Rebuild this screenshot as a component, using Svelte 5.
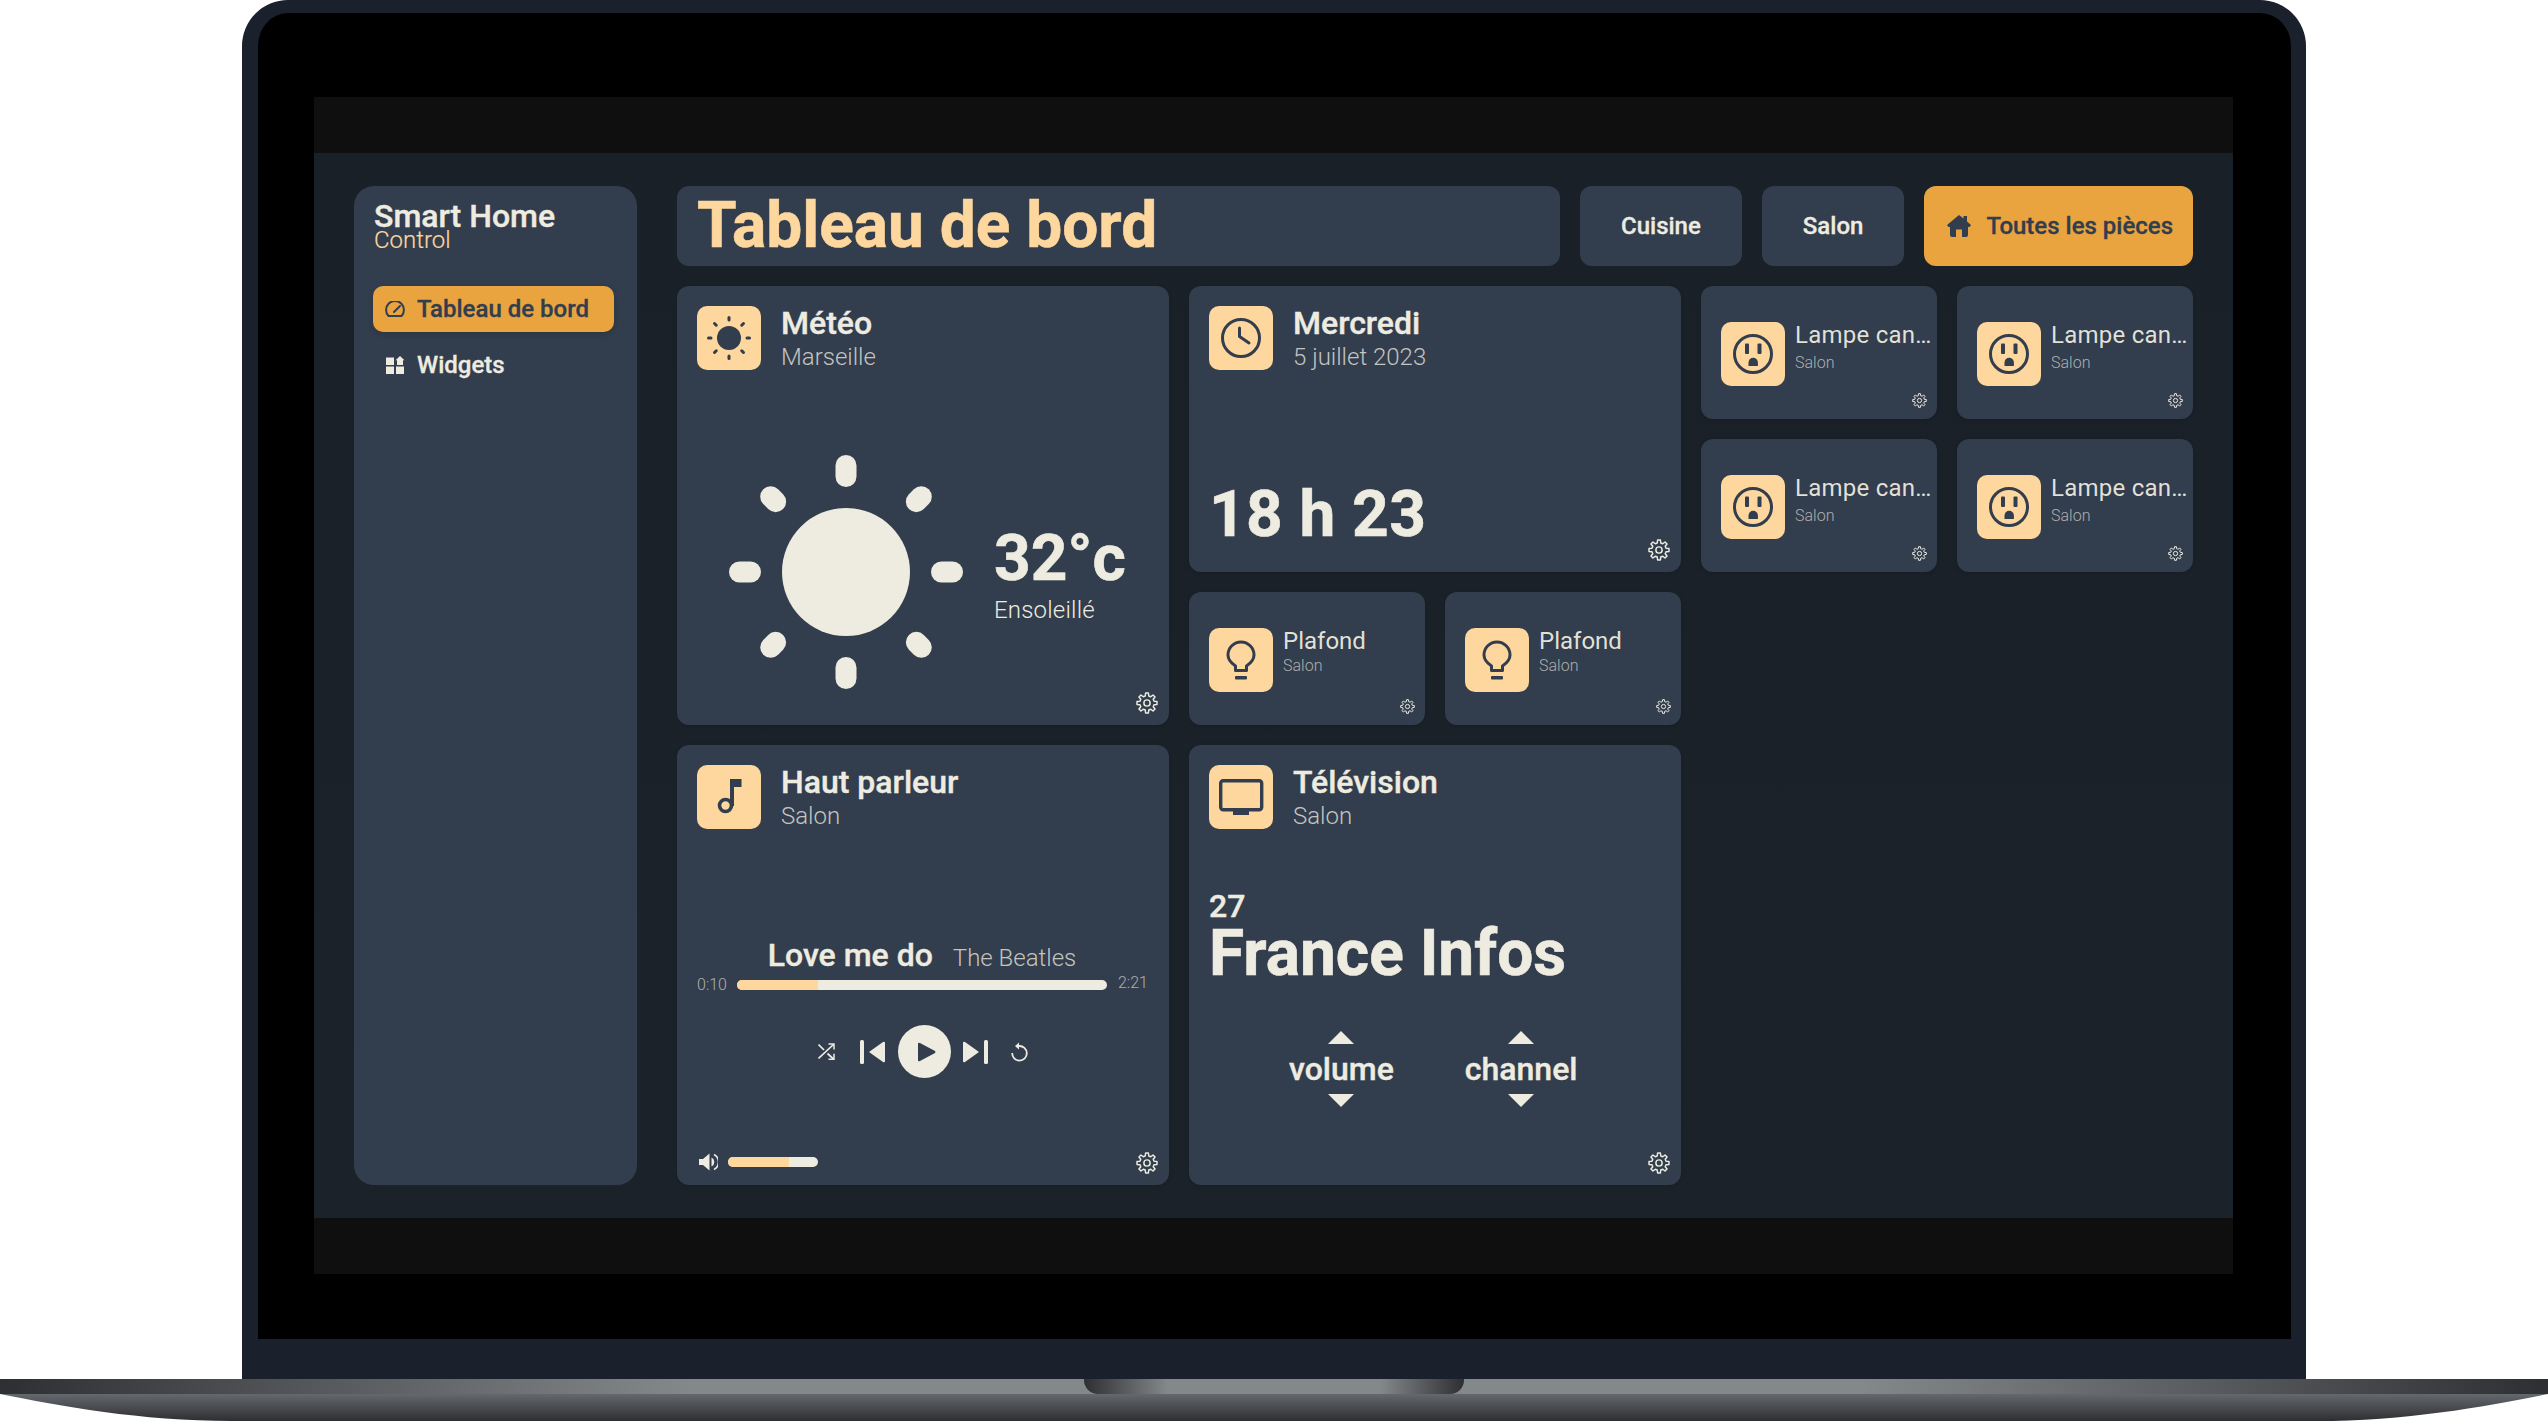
<script>
	// 8-tooth outline for the settings gear
	const gearPoints = [];
	for (let i = 0; i < 8; i++) {
		const a = i * 45 - 90;
		for (const [r, d] of [[7.9, -14], [11, -8], [11, 8], [7.9, 14]]) {
			const rad = ((a + d) * Math.PI) / 180;
			gearPoints.push((12 + r * Math.cos(rad)).toFixed(2) + "," + (12 + r * Math.sin(rad)).toFixed(2));
		}
	}
	const gear = gearPoints.join(" ");

	const rays = [0, 45, 90, 135, 180, 225, 270, 315];
	const plafonds = [1, 2];
	const lamps = [1, 2, 3, 4];
</script>

{#snippet settings(small)}
	<svg class="gear" class:small viewBox="0 0 24 24" fill="none" stroke="#eeece0" stroke-width="1.6" stroke-linejoin="round">
		<polygon points={gear} />
		<circle cx="12" cy="12" r="3.4" />
	</svg>
{/snippet}

{#snippet head(title, sub)}
	<div class="head-text">
		<div class="title">{title}</div>
		<div class="sub">{sub}</div>
	</div>
{/snippet}

{#snippet mini(name)}
	<div class="mini-text">
		<div class="mini-title">{name}</div>
		<div class="mini-sub">Salon</div>
	</div>
{/snippet}

<div class="device">
	<div class="lid">
		<div class="screen">
			<div class="bar"></div>
			<div class="app">
				<aside class="side">
					<div class="brand">Smart Home</div>
					<div class="brand-sub">Control</div>
					<nav>
						<div class="nav-item active">
							<svg width="20" height="16" viewBox="0 0 20 16" fill="none" stroke="#323d4d" stroke-width="2" stroke-linecap="round" stroke-linejoin="round">
								<path d="M3.5 15H16.500A8.900 8.900 0 1 0 3.500 15Z" />
								<path d="M9 11L15 5" />
							</svg>
							Tableau de bord
						</div>
						<div class="nav-item">
							<svg width="20" height="18" viewBox="0 0 19 18" fill="#eeece0">
								<rect x="0.500" y="1.500" width="8" height="7.500" />
								<rect x="0.500" y="10.500" width="8" height="7.500" />
								<rect x="10.500" y="10.500" width="8" height="7.500" />
								<path d="M14.500 0L19 4.200H17.500V9H11.500V4.200H10Z" />
							</svg>
							Widgets
						</div>
					</nav>
				</aside>

				<main class="main">
					<header class="top">
						<h1>Tableau de bord</h1>
						<button class="room">Cuisine</button>
						<button class="room">Salon</button>
						<button class="on">
							<svg width="24" height="22" viewBox="0 0 24 22" fill="#323d4d">
								<path d="M12 0L16.500 3.500V1H20V6.500L24 10L22.500 12H21V20A2 2 0 0 1 19 22H15V14.500H9V22H5A2 2 0 0 1 3 20V12H1.500L0 10Z" />
							</svg>
							Toutes les pièces
						</button>
					</header>

					<section class="grid">
						<article class="card meteo">
							<div class="head">
								<svg class="tile" viewBox="0 0 64 64">
									<rect width="64" height="64" rx="10" fill="#fdd79d" />
									<circle cx="32" cy="32" r="12" fill="#323d4d" />
									{#each rays as r}
										<rect x="30.500" y="10" width="3" height="5.500" rx="1.500" fill="#323d4d" transform="rotate({r} 32 32)" />
									{/each}
								</svg>
								{@render head("Météo", "Marseille")}
							</div>
							<div class="weather">
								<svg width="234" height="234" viewBox="-117 -117 234 234" fill="#eeece0">
									<circle r="64" />
									{#each rays as r}
										{#if r % 90 === 0}
											<rect x="-10.500" y="-117" width="21" height="32" rx="10.500" transform="rotate({r})" />
										{:else}
											<rect x="-10.500" y="-117" width="21" height="28" rx="10.500" transform="rotate({r})" />
										{/if}
									{/each}
								</svg>
								<div class="temp">
									<div class="deg">32°c</div>
									<div class="cond">Ensoleillé</div>
								</div>
							</div>
							{@render settings(false)}
						</article>

						<article class="card clock">
							<div class="head">
								<svg class="tile" viewBox="0 0 64 64" fill="none" stroke="#323d4d" stroke-width="3">
									<rect width="64" height="64" rx="10" fill="#fdd79d" stroke="none" />
									<circle cx="32" cy="32" r="18.500" />
									<path d="M30.500 22V30.500L40 37" stroke-linecap="round" stroke-linejoin="round" />
								</svg>
								{@render head("Mercredi", "5 juillet 2023")}
							</div>
							<div class="time">18 h 23</div>
							{@render settings(false)}
						</article>

						{#each lamps as l}
							<article class="card small lamp">
								<svg class="tile" viewBox="0 0 64 64" fill="none" stroke="#323d4d" stroke-width="3">
									<rect width="64" height="64" rx="10" fill="#fdd79d" stroke="none" />
									<circle cx="32" cy="32" r="18.500" />
									<g fill="#323d4d" stroke="none">
										<rect x="24" y="21.500" width="4" height="10.500" rx="1" />
										<rect x="36.500" y="21.500" width="4" height="10.500" rx="1" />
										<path d="M27.500 44V40.500A4.700 4.700 0 0 1 36.900 40.500V44Z" />
									</g>
								</svg>
								{@render mini("Lampe canapé")}
								{@render settings(true)}
							</article>
						{/each}

						{#each plafonds as p}
							<article class="card small plafond">
								<svg class="tile" viewBox="0 0 64 64" fill="none" stroke="#323d4d" stroke-width="3">
									<rect width="64" height="64" rx="10" fill="#fdd79d" stroke="none" />
									<path d="M26.500 42.500H37.500V38C42 35 45 31.500 45 27A13 13 0 0 0 19 27C19 31.500 22 35 26.500 38Z" stroke-linejoin="round" />
									<rect x="26" y="48" width="12" height="3.500" rx="1" fill="#323d4d" stroke="none" />
								</svg>
								{@render mini("Plafond")}
								{@render settings(true)}
							</article>
						{/each}

						<article class="card speaker">
							<div class="head">
								<svg class="tile" viewBox="0 0 64 64">
									<rect width="64" height="64" rx="10" fill="#fdd79d" />
									<path d="M33 14H44.500V22H37V41H33Z" fill="#323d4d" />
									<circle cx="28.500" cy="40.500" r="6" fill="none" stroke="#323d4d" stroke-width="3.600" />
								</svg>
								{@render head("Haut parleur", "Salon")}
							</div>
							<div class="song">
								<span class="song-name">Love me do</span>
								<span class="song-artist">The Beatles</span>
							</div>
							<div class="progress">
								<span class="stamp">0:10</span>
								<div class="track wide"><div class="fill" style="width: 22%"></div></div>
								<span class="stamp end">2:21</span>
							</div>
							<div class="controls">
								<svg class="shuffle" width="17" height="17" viewBox="0 0 17 17" fill="none" stroke="#eeece0" stroke-width="1.700">
									<path d="M0.500 1.500L6 7M9.500 10.500L15.500 16M0.500 15.500L15.500 1.500" />
									<path d="M10.500 1H16V6.500M10.500 16.200H16V10.700" stroke-width="1.500" />
								</svg>
								<svg class="prev" width="25" height="24" viewBox="0 0 25 24" fill="#eeece0">
									<rect width="4" height="24" rx="1.500" />
									<path d="M9 12L23 2Q25 1 25 3V21Q25 23 23 22Z" />
								</svg>
								<div class="play">
									<svg width="18" height="20" viewBox="0 0 18 20" fill="#323d4d">
										<path d="M0 2Q0 0 2 1L17 9Q18 10 17 11L2 19Q0 20 0 18Z" />
									</svg>
								</div>
								<svg class="next" width="25" height="24" viewBox="0 0 25 24" fill="#eeece0">
									<rect x="21" width="4" height="24" rx="1.500" />
									<path d="M16 12L2 2Q0 1 0 3V21Q0 23 2 22Z" />
								</svg>
								<svg class="repeat" width="17" height="20" viewBox="0 0 17 20" fill="none" stroke="#eeece0" stroke-width="1.800">
									<path d="M8 4A7.300 7.300 0 1 1 1.200 11" />
									<path d="M8 0.500L4 4L8 7.500Z" fill="#eeece0" stroke="none" />
								</svg>
							</div>
							<div class="volume">
								<svg width="19" height="18" viewBox="0 0 19 18" fill="#eeece0">
									<path d="M0 6H4L10.500 0.500V17.500L4 12H0Z" />
									<path d="M12.500 4.500A5 5 0 0 1 12.500 13.500Z" />
									<path d="M15 1.500A8.500 8.500 0 0 1 15 16.500" fill="none" stroke="#eeece0" stroke-width="1.600" />
								</svg>
								<div class="track short"><div class="fill" style="width: 68%"></div></div>
							</div>
							{@render settings(false)}
						</article>

						<article class="card tv">
							<div class="head">
								<svg class="tile" viewBox="0 0 64 64">
									<rect width="64" height="64" rx="10" fill="#fdd79d" />
									<rect x="11.700" y="15.700" width="41" height="29" rx="2.500" fill="none" stroke="#323d4d" stroke-width="3.400" />
									<rect x="24" y="45" width="16" height="5" fill="#323d4d" />
								</svg>
								{@render head("Télévision", "Salon")}
							</div>
							<div class="chan-num">27</div>
							<div class="chan-name">France Infos</div>
							<div class="remote">
								<div class="rocker">
									<i class="up"></i>
									<span>volume</span>
									<i class="down"></i>
								</div>
								<div class="rocker">
									<i class="up"></i>
									<span>channel</span>
									<i class="down"></i>
								</div>
							</div>
							{@render settings(false)}
						</article>
					</section>
				</main>
			</div>
			<div class="bar"></div>
		</div>
	</div>
	<div class="base-top"><div class="notch"></div></div>
	<div class="base-bottom"></div>
</div>

<style>
	:global(body) {
		background: #fff;
		font-family: Roboto, "Liberation Sans", sans-serif;
		color: #eeece0;
	}

	.device {
		width: 2548px;
		height: 1421px;
		overflow: hidden;
		display: flex;
		flex-direction: column;
	}

	.lid {
		box-sizing: border-box;
		width: 2064px;
		height: 1379px;
		margin-left: 242px;
		background: #000;
		border: solid #1a202c;
		border-width: 13px 15px 40px 16px;
		border-radius: 46px 46px 0 0;
		padding: 84px 58px 65px 56px;
	}

	.screen {
		height: 100%;
		display: flex;
		flex-direction: column;
	}

	.bar {
		height: 56px;
		background: #0f0f0f;
	}

	.app {
		flex: 1;
		background: linear-gradient(#1a2028, #1b2229);
		display: flex;
		gap: 40px;
		padding: 33px 40px;
		min-height: 0;
	}

	.side {
		width: 283px;
		flex: none;
		box-sizing: border-box;
		background: #323d4d;
		border-radius: 20px;
		padding: 16px 23px 0 19px;
	}

	.brand {
		font-size: 32px;
		font-weight: 500;
		line-height: 28px;
		margin-left: 1px;
		-webkit-text-stroke: 0.4px;
	}

	.brand-sub {
		font-size: 24px;
		font-weight: 300;
		line-height: 22px;
		margin: -1px 0 0 1px;
		color: #fdd79d;
		-webkit-text-stroke: 0.2px;
	}

	nav {
		margin-top: 35px;
		display: flex;
		flex-direction: column;
		gap: 10px;
	}

	.nav-item {
		height: 46px;
		display: flex;
		align-items: center;
		gap: 12px;
		padding-left: 12px;
		font-size: 24px;
		font-weight: 500;
		border-radius: 10px;
		-webkit-text-stroke: 0.3px;
	}

	.nav-item.active {
		background: #e9a440;
		color: #323d4d;
		box-shadow: 0 2px 6px rgba(0, 0, 0, 0.15);
	}

	.main {
		flex: 1;
		min-width: 0;
	}

	.top {
		display: flex;
		gap: 20px;
		height: 80px;
		margin-bottom: 20px;
	}

	h1 {
		flex: 1;
		margin: 0;
		background: #323d4d;
		border-radius: 12px;
		padding-left: 20px;
		font-size: 64px;
		font-weight: 700;
		line-height: 80px;
		color: #fdd79d;
		-webkit-text-stroke: 0.6px;
	}

	button {
		border: 0;
		border-radius: 12px;
		font: 500 24px Roboto, sans-serif;
		-webkit-text-stroke: 0.3px;
	}

	button.room {
		background: #323d4d;
		color: #eeece0;
		padding: 0 41px;
	}

	button.on {
		display: flex;
		align-items: center;
		gap: 15px;
		padding: 0 20px 0 23px;
		background: #e9a440;
		color: #323d4d;
	}

	.grid {
		display: grid;
		grid-template-columns: repeat(6, 236px);
		grid-template-rows: repeat(5, 133px) 134px;
		gap: 20px;
	}

	.card {
		position: relative;
		box-sizing: border-box;
		background: #323d4d;
		border-radius: 12px;
		padding: 20px;
		display: flex;
		flex-direction: column;
		min-width: 0;
		box-shadow: 0 1px 4px rgba(0, 0, 0, 0.12);
	}

	.meteo {
		grid-column: span 2;
		grid-row: span 3;
	}

	.clock {
		grid-column: span 2;
		grid-row: span 2;
	}

	.speaker {
		grid-column: 1 / span 2;
		grid-row: 4 / span 3;
		padding-bottom: 11px;
	}

	.tv {
		grid-column: 3 / span 2;
		grid-row: 4 / span 3;
	}

	.small {
		flex-direction: row;
		gap: 10px;
		padding: 36px 0 0 20px;
	}

	.gear {
		position: absolute;
		right: 11px;
		bottom: 11px;
		width: 22px;
		height: 22px;
	}

	.gear.small {
		right: 10px;
		bottom: 11px;
		width: 15px;
		height: 15px;
	}

	.head {
		display: flex;
		gap: 20px;
		flex: none;
	}

	.tile {
		width: 64px;
		height: 64px;
		flex: none;
	}

	.title {
		font-size: 32px;
		font-weight: 500;
		line-height: 36px;
		margin-top: -1px;
		-webkit-text-stroke: 0.4px;
	}

	.sub {
		font-size: 24px;
		font-weight: 300;
		line-height: 28px;
		margin-top: 2px;
		color: rgba(238, 236, 224, 0.78);
	}

	.mini-text {
		min-width: 0;
		flex: 1;
		padding-right: 2px;
		margin-top: -1px;
	}

	.mini-title {
		font-size: 24px;
		font-weight: 400;
		line-height: 28px;
		white-space: nowrap;
		overflow: hidden;
		text-overflow: ellipsis;
		color: rgba(238, 236, 224, 0.95);
	}

	.lamp .mini-title {
		letter-spacing: 0.25px;
	}

	.mini-sub {
		font-size: 16px;
		font-weight: 300;
		line-height: 20px;
		margin-top: 1px;
		color: rgba(238, 236, 224, 0.66);
	}

	.lamp .mini-sub {
		margin-top: 4px;
	}

	.weather {
		display: flex;
		align-items: center;
		gap: 31px;
		margin: 84px 0 0 32px;
	}

	.temp {
		margin-top: 6px;
	}

	.deg {
		font-size: 64px;
		font-weight: 700;
		line-height: 64px;
		-webkit-text-stroke: 0.6px;
	}

	.cond {
		font-size: 24px;
		font-weight: 300;
		line-height: 28px;
		margin-top: 5px;
		letter-spacing: 0.2px;
	}

	.time {
		margin-top: auto;
		margin-bottom: 5px;
		font-size: 64px;
		font-weight: 700;
		line-height: 64px;
		letter-spacing: 0.4px;
		-webkit-text-stroke: 0.6px;
	}

	.song {
		margin-top: 107px;
		padding-right: 2px;
		display: flex;
		justify-content: center;
		align-items: baseline;
		gap: 20px;
	}

	.song-name {
		font-size: 32px;
		font-weight: 500;
		line-height: 36px;
		-webkit-text-stroke: 0.4px;
	}

	.song-artist {
		font-size: 24px;
		font-weight: 300;
		color: rgba(238, 236, 224, 0.78);
	}

	.progress {
		margin-top: 2px;
		display: flex;
		align-items: center;
		gap: 10px;
		height: 20px;
	}

	.stamp {
		font-size: 16px;
		font-weight: 300;
		line-height: 20px;
		color: rgba(238, 236, 224, 0.66);
	}

	.stamp.end {
		margin: 0 0 4px 1px;
	}

	.track {
		height: 10px;
		border-radius: 5px;
		background: #eeece0;
		overflow: hidden;
	}

	.track.wide {
		width: 370px;
	}

	.track.short {
		width: 90px;
	}

	.fill {
		height: 100%;
		background: #fdd79d;
	}

	.controls {
		margin-top: 30px;
		display: flex;
		align-items: center;
		justify-content: center;
	}

	.prev {
		margin: 0 13px 0 25px;
	}

	.next {
		margin: 0 23px 0 12px;
	}

	.play {
		width: 53px;
		height: 53px;
		border-radius: 50%;
		background: #eeece0;
		display: flex;
		align-items: center;
		justify-content: center;
	}

	.play svg {
		margin-left: 4px;
	}

	.volume {
		margin-top: auto;
		height: 24px;
		display: flex;
		align-items: center;
		gap: 10px;
		padding-left: 2px;
	}

	.chan-num {
		margin-top: 58px;
		font-size: 32px;
		font-weight: 500;
		line-height: 36px;
		-webkit-text-stroke: 0.4px;
	}

	.chan-name {
		margin-top: -2px;
		font-size: 64px;
		font-weight: 700;
		line-height: 64px;
		-webkit-text-stroke: 0.6px;
	}

	.remote {
		margin: 45px 0 0 80px;
		display: flex;
		gap: 71px;
	}

	.rocker {
		display: flex;
		flex-direction: column;
		align-items: center;
		gap: 7px;
		font-size: 32px;
		font-weight: 500;
		line-height: 36px;
		-webkit-text-stroke: 0.4px;
	}

	.up,
	.down {
		width: 0;
		height: 0;
		border-left: 13px solid transparent;
		border-right: 13px solid transparent;
	}

	.up {
		border-bottom: 13px solid #eeece0;
	}

	.down {
		border-top: 13px solid #eeece0;
	}

	.base-top {
		height: 15px;
		flex: none;
		background: linear-gradient(90deg, #2e2f33, #83888b 27%, #83888b 73%, #2e2f33);
		display: flex;
		justify-content: center;
	}

	.notch {
		width: 380px;
		height: 15px;
		border-radius: 0 0 14px 14px;
		background: linear-gradient(90deg, #2e2f33, #83888b 22%, #83888b 78%, #2e2f33);
	}

	.base-bottom {
		height: 27px;
		flex: none;
		background: linear-gradient(#64696d, #2e2e32);
		clip-path: path("M0 0H2548C2488 12 2408 27 2316 27H232C140 27 60 12 0 0Z");
	}
</style>
